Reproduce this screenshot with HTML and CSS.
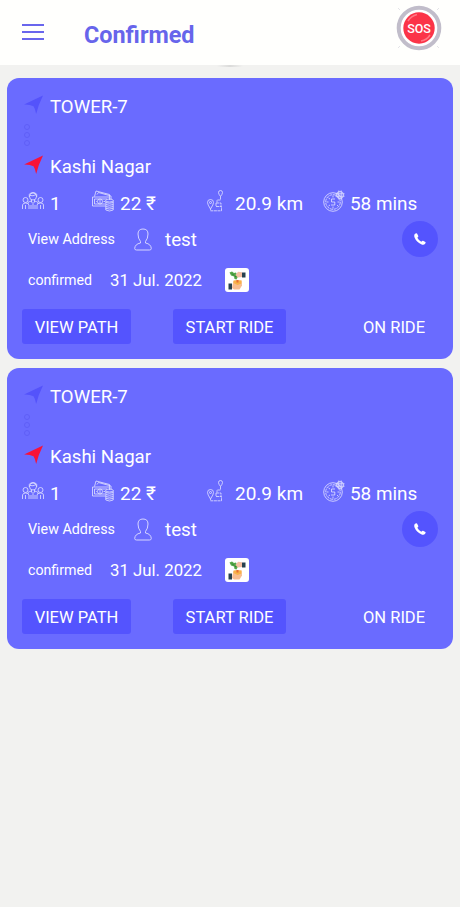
FILE: index.html
```
<!DOCTYPE html>
<html lang="en">
<head>
  <meta charset="UTF-8">
  <meta name="viewport" content="width=device-width, initial-scale=1">
  <title>Confirmed</title>
  <link rel="stylesheet" href="styles.css">
</head>
<body>

<!-- shared icons -->
<svg class="sprite">
  <symbol id="arrow" viewBox="0 0 20 20"><path d="M20 0Q15 10 12.800 19.500Q12 14 10 11.300Q6 9.300 0 9.500Z"/></symbol>
  <symbol id="people" viewBox="0 0 22 18">
    <circle cx="11" cy="4.500" r="3.500"/><path d="M7.300 5V2.500Q8 .5 11 .5T14.700 2.500V5M8 3.500Q11 4.500 14 2.500M9.500 8v2l1.500 1.500L12.500 10V8M6 12V10.500Q7 9.500 9.500 9M12.500 9Q15 9.500 16 10.500V12"/>
    <circle cx="3.500" cy="8" r="2.500"/><circle cx="18.500" cy="8" r="2.500"/>
    <path d="M.5 17V13Q1 11 3.500 11T7 13V17M15 17V13Q15.500 11 18.500 11T21.500 13V17M9 17V13M13 17V13M3.500 13v4M18.500 13v4M11 12v5"/>
  </symbol>
  <symbol id="cash" viewBox="0 0 22 22">
    <path d="M2.500 6.500L4 1L17.500 4.500V7M5 4.500L6.500 2.500L19 6V9.500M13.500 16H.5V7H17.500V10M2.500 14V9H15M2.500 14H13"/>
    <circle cx="8" cy="11.500" r="2.500"/><path d="M8 10v3M4 11.500h.8M11.500 11.500h1.500"/>
    <ellipse cx="17.500" cy="10.500" rx="3.700" ry="1.500"/><path d="M13.800 10.500V20Q17.500 22 21.200 20V10.500M13.800 12.500Q17.500 14 21.200 12.500M13.800 14.500Q17.500 16 21.200 14.500M13.800 16.500Q17.500 18 21.200 16.500M13.800 18.300Q17.500 19.800 21.200 18.300"/>
  </symbol>
  <symbol id="route" viewBox="0 0 17 22">
    <path d="M3.500 19Q.5 14.500 .5 12.500A3 3 0 0 1 6.500 12.500Q6.500 14.500 3.500 19Z"/><circle cx="3.500" cy="12.500" r="1"/>
    <path d="M13.500 6.500Q11.500 4 11.500 2.500A2 2 0 0 1 15.500 2.500Q15.500 4 13.500 6.500Z"/>
    <path d="M13.500 6.500V10H10V12.500M9 13H14V16.500M9 13v3.500M9 16.500H14.500V20.800H3.500V19" stroke-dasharray="3 .6"/>
  </symbol>
  <symbol id="clock" viewBox="0 0 22 22">
    <circle cx="10" cy="12" r="9.300"/><circle cx="10" cy="12" r="7.300" stroke-dasharray="3 .8"/>
    <path d="M10 5.500v2M10 16.500v2M3.500 12h2M14.500 12h2M12 9H8.500V12H11.800V15H8M5.500 8l1.500 1M5.500 16l1.500-1M14 15l1 1"/>
    <circle cx="17" cy="5" r="3.500"/><path d="M15.800 .5v9M18.200 .5v9M12.500 3.800h9M12.500 6.200h9"/>
  </symbol>
  <symbol id="user" viewBox="0 0 18 23">
    <path d="M6.500 13.500Q4 10.500 4 6Q4 1 9 1T14 6Q14 10.500 11.500 13.500V15Q17 16 17.300 20.500Q17.300 22 15.500 22H2.500Q.7 22 .7 20.500Q1 16 6.500 15Z"/>
  </symbol>
  <symbol id="phone" viewBox="0 0 12 12">
    <path d="M.8 1Q2.300-.2 3 .6L4.300 3Q4.500 3.800 3.300 4.700Q4.700 7.300 7.300 8.700Q8.400 7.500 9 7.700L11.400 9.100Q12 9.800 10.900 11Q9.600 12.300 7.200 11.200Q2.500 9.300.7 4.800Q-.3 2.200.8 1Z"/>
  </symbol>
  <symbol id="payment" viewBox="0 0 24 24">
    <rect width="24" height="24" rx="3" fill="#fff"/>
    <path d="M4.500 4.500l2.500-1 2 1.500 2-.5 2 4-1.500 3-2-.5-.5-2.500-3-1z" fill="#56a94a"/>
    <path d="M7 5.500l2 2M10 9l1.500-1" stroke="#2e7932"/>
    <path d="M10.500 7L13 3.700l4 .5V9l-4 .5z" fill="#f6bfa2"/>
    <path d="M17 4.500h3.500v5h-3.500z" fill="#27414f"/>
    <path d="M7.500 17l1-4 3-1 5 .5.5 5-2.500 4H9l-2-1.500z" fill="#f8bd90"/>
    <path d="M8.500 12.500h8v3l-4 1.500-4-2z" fill="#f8b348"/>
    <path d="M11.500 12h2v2.500h-2z" fill="#e76b35"/>
    <path d="M3.500 15.500h3.500v6h-3.500z" fill="#27414f"/>
  </symbol>
</svg>

<header>
  <button class="menu" aria-label="Menu"><span></span><span></span><span></span></button>
  <h1>Confirmed</h1>
  <svg class="sos" viewBox="0 0 48 48">
    <path d="M3 4l2 2M44 4l-2 2M3 44l2-2M44 44l-2-2" stroke="#e4e4e8"/>
    <circle cx="24" cy="24" r="20.300" fill="#fff" stroke="#c1bdca" stroke-width="4"/>
    <circle cx="24" cy="24" r="15.700" fill="#fb3448"/>
    <path d="M13 17Q16 12 22 10.500M26 37Q32 36 35 31" stroke="#ff7884" stroke-width="1.500" fill="none"/>
    <text x="24" y="28.500" text-anchor="middle">SOS</text>
  </svg>
</header>

<main>
  <section class="card">
    <div class="place"><svg class="from"><use href="#arrow"/></svg>TOWER-7</div>
    <div class="dots"><i></i><i></i><i></i></div>
    <div class="place"><svg class="to"><use href="#arrow"/></svg>Kashi Nagar</div>
    <div class="stats">
      <div class="stat people"><svg><use href="#people"/></svg>1</div>
      <div class="stat"><svg><use href="#cash"/></svg>22 ₹</div>
      <div class="stat route"><svg><use href="#route"/></svg>20.9 km</div>
      <div class="stat time"><svg><use href="#clock"/></svg>58 mins</div>
    </div>
    <div class="contact">
      <a class="address">View Address</a>
      <svg class="user"><use href="#user"/></svg>
      <span class="name">test</span>
      <button class="call" aria-label="Call"><svg><use href="#phone"/></svg></button>
    </div>
    <div class="status">
      <span class="state">confirmed</span>
      <span class="date">31 Jul. 2022</span>
      <svg><use href="#payment"/></svg>
    </div>
    <div class="actions">
      <button class="btn path">VIEW PATH</button>
      <button class="btn start">START RIDE</button>
      <span class="on-ride">ON RIDE</span>
    </div>
  </section>

  <section class="card">
    <div class="place"><svg class="from"><use href="#arrow"/></svg>TOWER-7</div>
    <div class="dots"><i></i><i></i><i></i></div>
    <div class="place"><svg class="to"><use href="#arrow"/></svg>Kashi Nagar</div>
    <div class="stats">
      <div class="stat people"><svg><use href="#people"/></svg>1</div>
      <div class="stat"><svg><use href="#cash"/></svg>22 ₹</div>
      <div class="stat route"><svg><use href="#route"/></svg>20.9 km</div>
      <div class="stat time"><svg><use href="#clock"/></svg>58 mins</div>
    </div>
    <div class="contact">
      <a class="address">View Address</a>
      <svg class="user"><use href="#user"/></svg>
      <span class="name">test</span>
      <button class="call" aria-label="Call"><svg><use href="#phone"/></svg></button>
    </div>
    <div class="status">
      <span class="state">confirmed</span>
      <span class="date">31 Jul. 2022</span>
      <svg><use href="#payment"/></svg>
    </div>
    <div class="actions">
      <button class="btn path">VIEW PATH</button>
      <button class="btn start">START RIDE</button>
      <span class="on-ride">ON RIDE</span>
    </div>
  </section>
</main>

</body>
</html>
```
FILE: styles.css
```
* { box-sizing: border-box; }
body { margin: 0; min-height: 100vh; background: #f2f2f0; color: #fff; font-family: Roboto, "Liberation Sans", sans-serif; }
button { border: none; padding: 0; color: inherit; font-family: inherit; cursor: pointer; }
svg { display: block; flex: none; }
.sprite { display: none; }

header { display: flex; height: 65px; background: #fffffd; padding-left: 22px; position: relative; }
header::after { content: ""; position: absolute; left: 217px; top: 65px; width: 26px; height: 2px; background: linear-gradient(90deg, #f2f2f0, #dadad9, #f2f2f0); }
.menu { display: flex; flex-direction: column; justify-content: space-between; width: 22px; height: 16px; margin-top: 24px; background: none; }
.menu span { width: 22px; height: 2px; background: #6966ed; flex: none; }
h1 { margin: 20px 0 0 40px; width: 312px; font-size: 23.400px; line-height: 30px; font-weight: 700; color: #6765eb; }
.sos { width: 48px; height: 48px; margin-top: 4px; margin-left: -1px; }
.sos text { font: 500 12.500px Roboto, sans-serif; fill: #fff; }

main { padding: 13px 7px; display: flex; flex-direction: column; gap: 9px; }
.card { height: 281px; padding: 17px 15px 0; background: #6a6bff; border-radius: 12px; }

.place { display: flex; align-items: center; height: 24px; font-size: 18.600px; }
.place svg { width: 19px; height: 20px; margin: -4px 7px 0 2px; }
.from { fill: #5453fb; }
.to { fill: #f8123a; }
.dots { height: 36px; padding: 5px 0 0 2px; display: flex; flex-direction: column; gap: 2px; }
.dots i { width: 6px; height: 6px; border: 1px solid #5f5ff7; border-radius: 50%; }

.stats { display: grid; grid-template-columns: 70px 115px 116px 1fr; height: 24px; margin-top: 12px; }
.stat { display: flex; align-items: center; gap: 6px; font-size: 19px; white-space: nowrap; }
.stat svg { width: 22px; height: 22px; margin-top: -5px; fill: none; stroke: #e3e3ff; stroke-width: .8; }
.people svg { height: 18px; }
.route svg { width: 17px; margin-right: 5px; }
.time { gap: 5px; font-size: 18.900px; }

.contact { display: flex; align-items: center; height: 36px; margin-top: 6px; padding-left: 6px; }
.address { width: 106px; font-size: 14.300px; }
.user { width: 18px; height: 23px; fill: none; stroke: #d5d5ff; stroke-width: 1; }
.name { margin: 1px 0 0 13px; font-size: 18.800px; }
.call { display: flex; align-items: center; justify-content: center; width: 36px; height: 36px; margin-left: auto; background: #5454fe; border-radius: 50%; }
.call svg { width: 12px; height: 12px; fill: #fff; }

.status { display: flex; align-items: center; height: 26px; margin-top: 10px; padding-left: 6px; }
.status svg { width: 24px; height: 24px; }
.state { width: 82px; font-size: 14.200px; }
.date { width: 115px; font-size: 16.800px; }

.actions { display: flex; align-items: center; height: 35px; margin-top: 16px; }
.btn { height: 35px; padding-top: 2px; background: #5454fe; border-radius: 3px; font-size: 16.500px; }
.path { width: 109px; }
.start { width: 113px; margin-left: 42px; }
.on-ride { margin-left: 77px; padding-top: 2px; font-size: 16.500px; }
```
